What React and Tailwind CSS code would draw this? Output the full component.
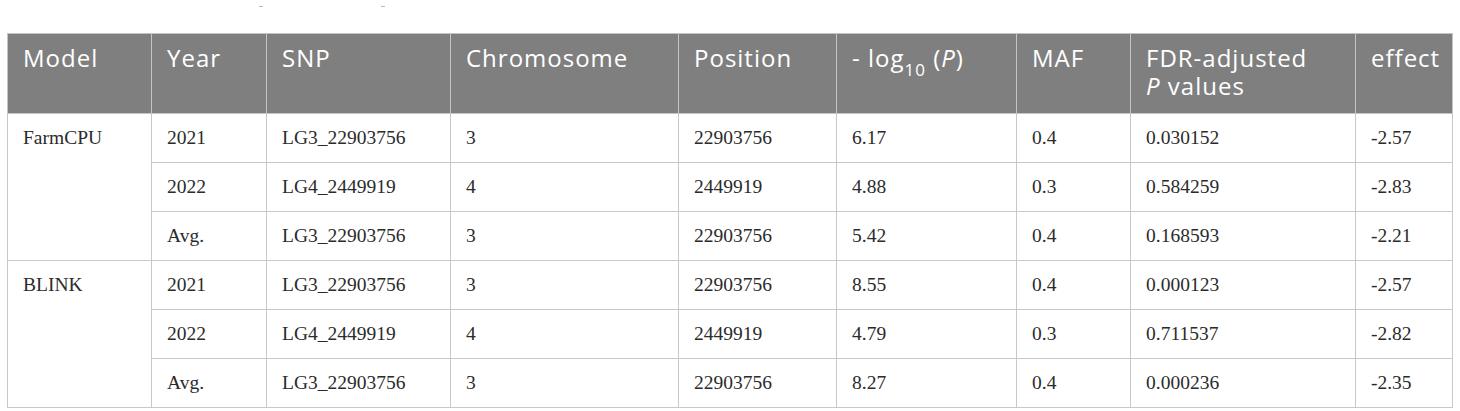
import React from "react";

const columns = [
  { key: "model", label: "Model", width: 144 },
  { key: "year", label: "Year", width: 115 },
  { key: "snp", label: "SNP", width: 184 },
  { key: "chr", label: "Chromosome", width: 228 },
  { key: "pos", label: "Position", width: 158 },
  { key: "logp", label: null, width: 180 },
  { key: "maf", label: "MAF", width: 114 },
  { key: "fdr", label: null, width: 225 },
  { key: "effect", label: "effect", width: 97 },
];

const groups = [
  {
    model: "FarmCPU",
    rows: [
      ["2021", "LG3_22903756", "3", "22903756", "6.17", "0.4", "0.030152", "-2.57"],
      ["2022", "LG4_2449919", "4", "2449919", "4.88", "0.3", "0.584259", "-2.83"],
      ["Avg.", "LG3_22903756", "3", "22903756", "5.42", "0.4", "0.168593", "-2.21"],
    ],
  },
  {
    model: "BLINK",
    rows: [
      ["2021", "LG3_22903756", "3", "22903756", "8.55", "0.4", "0.000123", "-2.57"],
      ["2022", "LG4_2449919", "4", "2449919", "4.79", "0.3", "0.711537", "-2.82"],
      ["Avg.", "LG3_22903756", "3", "22903756", "8.27", "0.4", "0.000236", "-2.35"],
    ],
  },
];

const headerLabel = (col) => {
  if (col.key === "logp") {
    return (
      <>
        - log<sub className="text-[17px] align-[-5px] leading-none">10</sub> (<i>P</i>)
      </>
    );
  }
  if (col.key === "fdr") {
    return (
      <>
        <span className="block">FDR-adjusted</span>
        <span className="block">
          <i>P</i> values
        </span>
      </>
    );
  }
  return col.label;
};

export default function App() {
  return (
    <div className="bg-white w-[1460px] h-[411px]">
      {/* cut-off caption remnants */}
      <div className="flex h-[33px] pt-[6px]">
        <div className="ml-[259px] w-[4px] h-[1px] bg-[#b8b8b8]" />
        <div className="ml-[118px] w-[4px] h-[1px] bg-[#b8b8b8]" />
      </div>
      <div className="pl-[7px]">
        <table className="table-fixed border-collapse w-[1445px]">
          <colgroup>
            {columns.map((c) => (
              <col key={c.key} style={{ width: c.width }} />
            ))}
          </colgroup>
          <thead>
            <tr className="bg-[#7f7f7f] h-[80px]">
              {columns.map((c) => (
                <th
                  key={c.key}
                  className="border border-[#c4c4c4] align-top text-left font-normal text-white text-[24px] tracking-[1px] leading-[28px] px-[15px] pt-[10px] pb-[12px] font-['Open_Sans','Liberation_Sans',sans-serif] whitespace-nowrap"
                >
                  {headerLabel(c)}
                </th>
              ))}
            </tr>
          </thead>
          <tbody className="font-['Liberation_Serif','Times_New_Roman',serif] text-[19.5px] text-[#2b2b2b]">
            {groups.map((g) =>
              g.rows.map((r, i) => (
                <tr key={g.model + i} className="h-[48px]">
                  {i === 0 && (
                    <td
                      rowSpan={g.rows.length}
                      className="border border-[#c8c8c8] align-top px-[15px] pt-[12px] leading-[24px]"
                    >
                      {g.model}
                    </td>
                  )}
                  {r.map((v, j) => (
                    <td
                      key={j}
                      className="border border-[#c8c8c8] px-[15px] py-[12px] leading-[24px]"
                    >
                      {v}
                    </td>
                  ))}
                </tr>
              ))
            )}
          </tbody>
        </table>
      </div>
    </div>
  );
}
